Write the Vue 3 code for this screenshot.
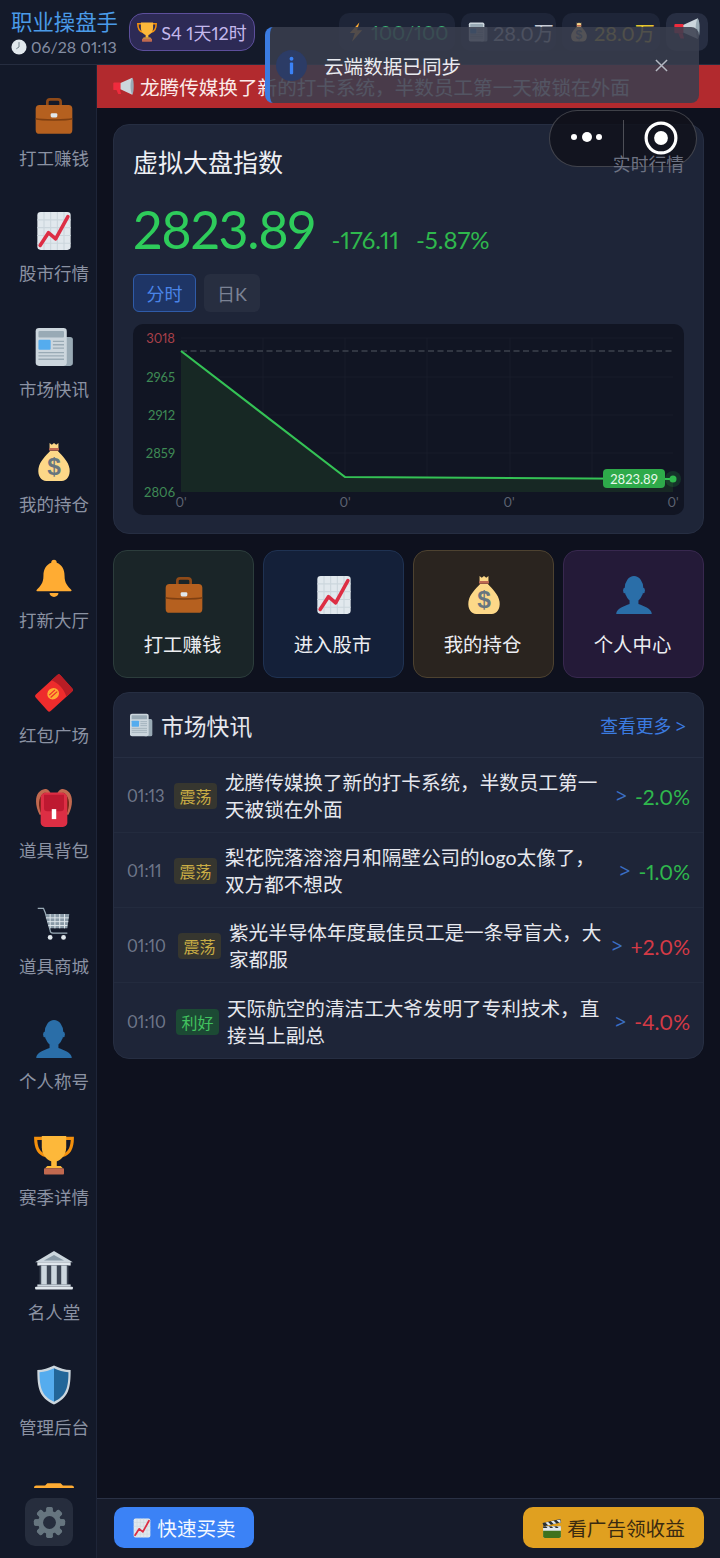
<script setup>
const navItems = [
  { icon: 'i-case', label: '打工赚钱' },
  { icon: 'i-chart', label: '股市行情' },
  { icon: 'i-news', label: '市场快讯' },
  { icon: 'i-bag', label: '我的持仓' },
  { icon: 'i-bell', label: '打新大厅' },
  { icon: 'i-packet', label: '红包广场' },
  { icon: 'i-pack', label: '道具背包' },
  { icon: 'i-cart', label: '道具商城' },
  { icon: 'i-bust', label: '个人称号' },
  { icon: 'i-trophy', label: '赛季详情' },
  { icon: 'i-bank', label: '名人堂' },
  { icon: 'i-shield', label: '管理后台' },
  { icon: 'i-top', label: '' }
]
const quick = [
  { icon: 'i-case', label: '打工赚钱', cls: 'q-green' },
  { icon: 'i-chart', label: '进入股市', cls: 'q-blue' },
  { icon: 'i-bag', label: '我的持仓', cls: 'q-amber' },
  { icon: 'i-bust', label: '个人中心', cls: 'q-purple' }
]
const news = [
  { time: '01:13', tw: 47, tag: '震荡', tc: 'flat', text: '龙腾传媒换了新的打卡系统，半数员工第一天被锁在外面', chg: '-2.0%', cc: 'down' },
  { time: '01:11', tw: 47, tag: '震荡', tc: 'flat', text: '梨花院落溶溶月和隔壁公司的logo太像了，双方都不想改', chg: '-1.0%', cc: 'down' },
  { time: '01:10', tw: 51, tag: '震荡', tc: 'flat', text: '紫光半导体年度最佳员工是一条导盲犬，大家都服', chg: '+2.0%', cc: 'up' },
  { time: '01:10', tw: 49, tag: '利好', tc: 'good', text: '天际航空的清洁工大爷发明了专利技术，直接当上副总', chg: '-4.0%', cc: 'up' }
]
const yLabels = [
  { y: 14, t: '3018', c: 'lbl-red' },
  { y: 53, t: '2965', c: 'lbl-green' },
  { y: 91, t: '2912', c: 'lbl-green' },
  { y: 129, t: '2859', c: 'lbl-green' },
  { y: 168, t: '2806', c: 'lbl-green' }
]
const hLines = [14, 53, 91, 129]
const vLines = [130, 212, 294, 377, 459]
const xLabels = [48, 212, 376, 540]
const gearTeeth = [0, 45, 90, 135, 180, 225, 270, 315]
</script>

<template>
  <div class="app">
    <svg class="defs" width="0" height="0" aria-hidden="true">
      <defs>
        <symbol id="i-case" viewBox="0 0 36 36">
          <path d="M12 9V5.5a2.5 2.5 0 0 1 2.5-2.5h7A2.5 2.5 0 0 1 24 5.5V9" fill="none" stroke="#8f4a18" stroke-width="2.4"/>
          <rect x="1.500" y="8" width="33" height="26" rx="3.500" fill="#b5601f"/>
          <path d="M1.500 20.500c5 1.400 28 1.400 33 0" fill="none" stroke="#7e3f12" stroke-width="1.400"/>
          <rect x="15" y="15.500" width="6" height="3.800" rx="1.200" fill="#e1e8ed"/>
        </symbol>
        <symbol id="i-chart" viewBox="0 0 36 36">
          <rect x="3" y="1" width="30" height="34" rx="3" fill="#e1e8ed"/>
          <path d="M3 8h30M3 15h30M3 22h30M3 29h30M9 1v34M15 1v34M21 1v34M27 1v34" stroke="#ccd6dd" stroke-width="1"/>
          <path d="M5.500 31 13 19.500l6.500 5.500L30.500 5" fill="none" stroke="#dd2e44" stroke-width="3.200" stroke-linecap="round" stroke-linejoin="round"/>
        </symbol>
        <symbol id="i-news" viewBox="0 0 36 36">
          <rect x="22" y="9" width="13" height="26" rx="2.500" fill="#99aab5"/>
          <rect x="1.500" y="1" width="28" height="34" rx="3" fill="#ccd6dd"/>
          <rect x="4" y="3.500" width="23" height="6" rx="1" fill="#99aab5"/>
          <rect x="4" y="11.500" width="11" height="9" rx="1" fill="#55acee"/>
          <path d="M17 13h10M17 16h10M17 19h10M4 23h23M4 26h23M4 29h23" stroke="#99aab5" stroke-width="1.200"/>
        </symbol>
        <symbol id="i-bag" viewBox="0 0 36 36">
          <path d="M14 1l2 1.500L18 1l2 1.500L22 1v5H14z" fill="#fdd888"/>
          <rect x="13.500" y="5.500" width="9" height="2.400" rx="1" fill="#bf6952"/>
          <path d="M14.500 8C11 12 5 17 4 24c-.8 6.500 2.500 11 7 11h14c4.500 0 7.800-4.500 7-11-1-7-7-12-10.500-16z" fill="#fdd888"/>
          <text x="18" y="30" text-anchor="middle" font-size="22" font-weight="700" font-family="Liberation Sans, sans-serif" fill="#67757f">$</text>
        </symbol>
        <symbol id="i-bell" viewBox="0 0 36 36">
          <path d="M18 1.500c-1.500 0-2.500 1-2.500 2.800C11 6 8.500 10 8.500 16c0 7-3 9.500-6 12.500-.8 1 0 1.500 1 1.500h29c1 0 1.800-.5 1-1.500-3-3-6-5.500-6-12.500 0-6-2.500-10-7-11.700C20.500 2.500 19.500 1.500 18 1.500z" fill="#ffac33"/>
          <path d="M14 31.500h8a4 3.500 0 0 1-8 0z" fill="#ffac33"/>
        </symbol>
        <symbol id="i-packet" viewBox="0 0 36 36">
          <g transform="rotate(-42 18 18)">
            <rect x="3" y="8" width="30" height="20" rx="2" fill="#ee2c2c"/>
            <path d="M24 8h7a2 2 0 0 1 2 2v16a2 2 0 0 1-2 2h-7c3-6 3-14 0-20z" fill="#b81d25"/>
            <ellipse cx="17" cy="18" rx="5.500" ry="5" fill="#ffac33"/>
            <path d="M13.500 16.500h7M13 19h8" stroke="#ee2c2c" stroke-width="1.100"/>
          </g>
        </symbol>
        <symbol id="i-pack" viewBox="0 0 36 36">
          <path d="M5 24C-1 12 2 2 10 1c3 0 4 2 5 4l-6 3v16z" fill="#c1694f"/>
          <path d="M31 24c6-12 3-22-5-23-3 0-4 2-5 4l6 3v16z" fill="#c1694f"/>
          <path d="M6 22C3 13 5 6 10 4l2 2-4 3v13z" fill="#662113"/>
          <path d="M30 22c3-9 1-16-4-18l-2 2 4 3v13z" fill="#662113"/>
          <path d="M6 9a5 5 0 0 1 5-5h14a5 5 0 0 1 5 5v22a4 4 0 0 1-4 4H10a4 4 0 0 1-4-4z" fill="#dd2e44"/>
          <path d="M9 6h18v12a3 3 0 0 1-3 3H12a3 3 0 0 1-3-3z" fill="#be1931"/>
          <rect x="16" y="19" width="4" height="9" fill="#fff"/>
        </symbol>
        <symbol id="i-cart" viewBox="0 0 36 36">
          <g transform="translate(2.500 3) scale(.86)">
            <path d="M1 1h6l2 5 5 18a3 3 0 0 0 3 3h15" fill="none" stroke="#99aab5" stroke-width="1.300"/>
            <path d="M9 7h25l-2 15H13z" fill="#8899a6"/>
            <path d="M9.500 11h24M11 15h22M12 19h20M14 7v15M19 7v15M24 7v15M29 7v15" stroke="#e1e8ed" stroke-width="1"/>
            <circle cx="14" cy="31.500" r="2.500" fill="#e1e8ed"/>
            <circle cx="28" cy="31.500" r="2.500" fill="#e1e8ed"/>
          </g>
        </symbol>
        <symbol id="i-bust" viewBox="0 0 36 36">
          <path d="M2 35c0-5 7-7 12-9v-4h8v4c5 2 12 4 12 9z" fill="#2a6ea8"/>
          <ellipse cx="18" cy="12.500" rx="8.500" ry="11.500" fill="#2a6ea8"/>
          <ellipse cx="9.500" cy="14" rx="1.300" ry="2.500" fill="#2a6ea8"/>
          <ellipse cx="26.500" cy="14" rx="1.300" ry="2.500" fill="#2a6ea8"/>
        </symbol>
        <symbol id="i-trophy" viewBox="0 0 36 36">
          <path d="M8 3H1.500c0 8 2.500 14 9 15.500M28 3h6.500c0 8-2.500 14-9 15.500" fill="none" stroke="#f4900c" stroke-width="2.800"/>
          <path d="M7 1h22v10c0 8-6 13-11 13S7 19 7 11z" fill="#fdb83a"/>
          <rect x="15.500" y="21" width="5" height="7" fill="#fdb83a"/>
          <path d="M12 28h12l2 2H10z" fill="#fdb83a"/>
          <rect x="9" y="30" width="18" height="5.500" rx=".8" fill="#c1694f"/>
        </symbol>
        <symbol id="i-bank" viewBox="0 0 36 36">
          <path d="M18 1 35 11H1z" fill="#ccd6dd"/>
          <path d="M18 4.500 27 9.500H9z" fill="#8899a6"/>
          <rect x="3" y="11" width="30" height="3" fill="#e1e8ed"/>
          <rect x="5" y="14" width="26" height="17" fill="#3b4452"/>
          <path d="M6.500 14h5v17h-5zM15.500 14h5v17h-5zM24.500 14h5v17h-5z" fill="#ccd6dd"/>
          <rect x="3" y="31" width="30" height="2" fill="#ccd6dd"/>
          <rect x="1" y="33" width="34" height="2.500" rx=".8" fill="#e1e8ed"/>
        </symbol>
        <symbol id="i-shield" viewBox="0 0 36 36">
          <path d="M18 .5C13 3 8 4.500 3 4.500c0 16 1.500 25 15 31 13.500-6 15-15 15-31-5 0-10-1.500-15-4z" fill="#ccd6dd"/>
          <path d="M18 3C14 5 9.500 6.300 5 6.500 5 20 7 28 18 33z" fill="#55acee"/>
          <path d="M18 3c4 2 8.500 3.300 13 3.500C31 20 29 28 18 33z" fill="#226699"/>
        </symbol>
        <symbol id="i-top" viewBox="0 0 36 36">
          <path d="M12 2h12l2 2h8a2 2 0 0 1 2 2v30H0V6a2 2 0 0 1 2-2h8z" fill="#ffac33"/>
        </symbol>
        <symbol id="i-bolt" viewBox="0 0 36 36">
          <path d="M24 1 7 20h9l-5 15 18-20h-9z" fill="#ffac33"/>
        </symbol>
        <symbol id="i-mega" viewBox="0 0 36 36">
          <path d="M33 3 11 13H3v9h8l22 10z" fill="#ccd6dd"/>
          <path d="M33 3c2 3 2.500 8 2.500 14s-.5 12-2.500 15c-2-3-3-9-3-15s1-11 3-14z" fill="#99aab5"/>
          <path d="M2 11h11v13H2a1.500 1.500 0 0 1-1.500-1.500v-10A1.500 1.500 0 0 1 2 11z" fill="#ef2b3d"/>
          <path d="M6 24h6l2 7H9z" fill="#ef2b3d"/>
        </symbol>
        <symbol id="i-clock" viewBox="0 0 36 36">
          <circle cx="18" cy="18" r="17" fill="#e1e8ed"/>
          <path d="M18 7v11l-6 4" fill="none" stroke="#66757f" stroke-width="2"/>
        </symbol>
        <symbol id="i-clap" viewBox="0 0 36 36">
          <path d="M2 15h32v18a3 3 0 0 1-3 3H5a3 3 0 0 1-3-3z" fill="#e1e8ed"/>
          <path d="M2 23h32v10a3 3 0 0 1-3 3H5a3 3 0 0 1-3-3z" fill="#3e721d"/>
          <path d="M1 9 33 2l1.500 6L3 15z" fill="#292f33"/>
          <path d="M6 8l5 5 5-1-5-5zM16 6l5 5 5-1-5-5zM26 3.500l5 5 3-.5-1.500-5z" fill="#e1e8ed"/>
          <path d="M2 15h32v3H2z" fill="#292f33"/>
          <path d="M7 15l3 3h5l-3-3zM17 15l3 3h5l-3-3zM27 15l3 3h4v-3z" fill="#e1e8ed"/>
        </symbol>
      </defs>
    </svg>

    <header class="topbar">
      <div class="brand">
        <div class="brand-name">职业操盘手</div>
        <div class="brand-time">
          <svg class="ic-clock"><use href="#i-clock" /></svg>
          <span>06/28 01:13</span>
        </div>
      </div>
      <div class="season">
        <svg class="ic-season"><use href="#i-trophy" /></svg>
        <span>S4 1天12时</span>
      </div>
      <div class="stats">
        <div class="pill pill-a">
          <svg class="ic-pill"><use href="#i-bolt" /></svg>
          <span class="val-green">100/100</span>
        </div>
        <div class="pill pill-b">
          <svg class="ic-pill"><use href="#i-news" /></svg>
          <span class="val-white">28.0万</span>
        </div>
        <div class="pill pill-c">
          <svg class="ic-pill"><use href="#i-bag" /></svg>
          <span class="val-yellow">28.0万</span>
        </div>
        <div class="pill pill-d">
          <svg class="ic-pill-m"><use href="#i-mega" /></svg>
        </div>
      </div>
    </header>

    <div class="body">
      <aside class="side">
        <div class="side-list">
          <div v-for="(n, i) in navItems" :key="i" class="side-item">
            <svg class="side-ic"><use :href="'#' + n.icon" /></svg>
            <div v-if="n.label" class="side-label">{{ n.label }}</div>
          </div>
        </div>
        <div class="side-foot">
          <div class="gear-box">
            <svg class="gear" viewBox="0 0 36 36">
              <rect v-for="a in gearTeeth" :key="a" x="14.500" y="1" width="7" height="34" rx="2" fill="#66757f" :transform="'rotate(' + a + ' 18 18)'" />
              <circle cx="18" cy="18" r="12.500" fill="#66757f" />
              <circle cx="18" cy="18" r="7" fill="#262d3d" />
            </svg>
          </div>
        </div>
      </aside>

      <div class="main">
        <div class="ticker">
          <svg class="ic-ticker"><use href="#i-mega" /></svg>
          <span>龙腾传媒换了新的打卡系统，半数员工第一天被锁在外面</span>
        </div>

        <div class="content">
          <section class="card index-card">
            <div class="index-head">
              <h2 class="index-title">虚拟大盘指数</h2>
              <span class="index-sub">实时行情</span>
            </div>
            <div class="price-row">
              <span class="price">2823.89</span>
              <span class="delta">-176.11</span>
              <span class="delta">-5.87%</span>
            </div>
            <div class="tabs">
              <div class="tab tab-on">分时</div>
              <div class="tab tab-off">日K</div>
            </div>
            <div class="chart">
              <svg width="552" height="191" viewBox="0 0 552 191">
                <g stroke="#181d2b" stroke-width="1">
                  <line v-for="y in hLines" :key="'h' + y" x1="48" x2="540" :y1="y" :y2="y" />
                  <line v-for="x in vLines" :key="'v' + x" :x1="x" :x2="x" y1="14" y2="168" />
                </g>
                <line x1="48" x2="540" y1="27" y2="27" stroke="#3d424e" stroke-width="1.500" stroke-dasharray="6 3.500" />
                <path d="M48 27 212 153 540 155V168H48z" fill="#172824" />
                <path d="M48 27 212 153 540 155" fill="none" stroke="#34c255" stroke-width="2.200" />
                <text v-for="l in yLabels" :key="l.t" x="42" :y="l.y + 4.500" text-anchor="end" class="axis" :class="l.c">{{ l.t }}</text>
                <text v-for="(x, i) in xLabels" :key="i" :x="x" y="183" text-anchor="middle" class="axis lbl-x">0'</text>
                <circle cx="540" cy="155" r="8" fill="#2fb84d" opacity=".18" />
                <circle cx="540" cy="155" r="3.500" fill="#2fb84d" />
                <rect x="470" y="145" width="62" height="19" rx="4" fill="#2eaa4a" />
                <text x="501" y="159.500" text-anchor="middle" class="axis lbl-price">2823.89</text>
              </svg>
            </div>
          </section>

          <div class="quick">
            <div v-for="q in quick" :key="q.label" class="q-btn" :class="q.cls">
              <svg class="q-ic"><use :href="'#' + q.icon" /></svg>
              <span class="q-label">{{ q.label }}</span>
            </div>
          </div>

          <section class="card news-card">
            <div class="news-head">
              <svg class="ic-news"><use href="#i-news" /></svg>
              <span class="news-title">市场快讯</span>
              <span class="news-more">查看更多 <i class="chev">&gt;</i></span>
            </div>
            <div v-for="(r, i) in news" :key="i" class="news-row">
              <span class="n-time" :style="{ width: r.tw + 'px' }">{{ r.time }}</span>
              <span class="n-tag" :class="r.tc">{{ r.tag }}</span>
              <span class="n-text">{{ r.text }}</span>
              <span class="n-arrow">&gt;</span>
              <span class="n-chg" :class="r.cc">{{ r.chg }}</span>
            </div>
          </section>
        </div>

        <footer class="bottom">
          <div class="b-btn b-buy">
            <svg class="ic-btn"><use href="#i-chart" /></svg>
            <span>快速买卖</span>
          </div>
          <div class="b-btn b-ad">
            <svg class="ic-btn"><use href="#i-clap" /></svg>
            <span>看广告领收益</span>
          </div>
        </footer>
      </div>
    </div>

    <div class="toast">
      <svg class="toast-ic" viewBox="0 0 32 32">
        <circle cx="16" cy="16" r="16" fill="#2c3c66" />
        <circle cx="16" cy="9" r="2" fill="#3b82f6" />
        <rect x="14.300" y="13" width="3.400" height="12" rx="1" fill="#3b82f6" />
      </svg>
      <span class="toast-text">云端数据已同步</span>
      <svg class="toast-x" viewBox="0 0 14 14">
        <path d="M1 1l12 12M13 1 1 13" stroke="#b4b8c2" stroke-width="1.600" fill="none" />
      </svg>
    </div>

    <div class="capsule">
      <svg class="cap-dots" viewBox="0 0 36 12">
        <circle cx="5" cy="6" r="3" fill="#fff" />
        <circle cx="18" cy="6" r="5" fill="#fff" />
        <circle cx="30" cy="6" r="3" fill="#fff" />
      </svg>
      <span class="cap-line"></span>
      <svg class="cap-rec" viewBox="0 0 32 32">
        <circle cx="16" cy="16" r="14" fill="none" stroke="#fff" stroke-width="3" />
        <circle cx="16" cy="16" r="6.500" fill="#fff" />
      </svg>
    </div>
  </div>
</template>

<style scoped>
.app {
  position: relative;
  width: 720px;
  height: 1558px;
  overflow: hidden;
  display: flex;
  flex-direction: column;
  background: #0e111e;
  color: #e6e8ee;
  font-family: "Lato", "Noto Sans CJK SC", sans-serif;
  font-variant-numeric: proportional-nums;
}
.defs { position: absolute; }

.topbar {
  height: 65px;
  flex: none;
  box-sizing: border-box;
  display: flex;
  align-items: center;
  padding: 0 12px 0 11px;
  background: #141a2a;
  border-bottom: 1px solid #262d40;
}
.brand { width: 118px; flex: none; }
.brand-name { font-size: 21.400px; line-height: 28px; color: #4a9be8; white-space: nowrap; }
.brand-time { display: flex; align-items: center; gap: 4px; margin-top: 1px; font-size: 16px; line-height: 20px; color: #848da2; white-space: nowrap; }
.ic-clock { width: 16px; height: 16px; }
.season {
  flex: none;
  width: 126px;
  height: 38px;
  box-sizing: border-box;
  display: flex;
  align-items: center;
  justify-content: center;
  gap: 4px;
  background: #2d2a55;
  border: 1px solid #5d4f9c;
  border-radius: 14px;
  color: #c4b8ec;
  font-size: 18px;
}
.ic-season { width: 20px; height: 20px; }
.stats { margin-left: auto; display: flex; gap: 6px; }
.pill {
  height: 38px;
  box-sizing: border-box;
  display: flex;
  align-items: center;
  gap: 5px;
  padding-left: 7px;
  background: #1e2538;
  border-radius: 10px;
  font-size: 20px;
  white-space: nowrap;
}
.pill-a { width: 116px; }
.pill-b { width: 95px; }
.pill-c { width: 98px; }
.pill-d { width: 42px; padding-left: 8px; background: #272e42; }
.ic-pill { width: 20px; height: 20px; flex: none; }
.ic-pill-m { width: 26px; height: 26px; margin-top: -6px; }
.val-green { color: #3bb273; }
.val-white { color: #c8ccd6; }
.val-yellow { color: #e6c52e; }

.body { flex: 1; display: flex; min-height: 0; }
.side {
  width: 97px;
  flex: none;
  box-sizing: border-box;
  background: #131929;
  border-right: 1px solid #1e2538;
  display: flex;
  flex-direction: column;
}
.side-list { height: 1423px; flex: none; overflow: hidden; }
.side-item {
  height: 115.400px;
  box-sizing: border-box;
  padding: 31px 0 0 12px;
  display: flex;
  flex-direction: column;
  align-items: center;
}
.side-ic { width: 40px; height: 40px; flex: none; }
.side-label { margin-top: 11px; font-size: 17.500px; line-height: 24px; color: #8b92a3; white-space: nowrap; }
.side-foot { padding: 10px 0 0 25px; }
.gear-box { width: 48px; height: 48px; background: #262d3d; border-radius: 10px; display: flex; align-items: center; justify-content: center; }
.gear { width: 33px; height: 33px; }

.main { flex: 1; min-width: 0; display: flex; flex-direction: column; }
.ticker {
  height: 43px;
  flex: none;
  display: flex;
  align-items: center;
  gap: 6px;
  padding-left: 16px;
  background: #b22a2e;
  color: #fbeaea;
  font-size: 19.600px;
  white-space: nowrap;
  overflow: hidden;
}
.ic-ticker { width: 21px; height: 21px; flex: none; }

.content { flex: 1; min-height: 0; padding: 16px 16px 0 16px; display: flex; flex-direction: column; }
.card { background: #1e2538; border: 1px solid #262e42; border-radius: 16px; box-sizing: border-box; }
.index-card { height: 410px; padding: 17px 19px 0; }
.index-head { display: flex; align-items: center; justify-content: space-between; height: 38px; }
.index-title { margin: 0; font-size: 25px; font-weight: 400; color: #eef0f5; }
.index-sub { font-size: 17.800px; color: #6d7282; position: relative; z-index: 30; top: 2px; }
.price-row { display: flex; align-items: baseline; margin-top: 19px; height: 60px; }
.price { font-size: 52px; line-height: 60px; margin-right: 17px; color: #2ecc5b; letter-spacing: -1.300px; }
.delta { font-size: 24px; margin-right: 17px; color: #2fb84d; }
.tabs { display: flex; gap: 8px; margin-top: 15px; }
.tab { height: 38px; box-sizing: border-box; display: flex; align-items: center; justify-content: center; border-radius: 6px; font-size: 18px; }
.tab-on { width: 63px; background: #1e3566; border: 1px solid #2f5ba8; color: #4a84e8; }
.tab-off { width: 56px; background: #272e40; color: #7b8294; }
.chart { margin-top: 12px; height: 191px; background: #111523; border-radius: 10px; overflow: hidden; }
.chart svg { display: block; }
.axis { font-size: 13px; font-family: "Lato", sans-serif; font-variant-numeric: proportional-nums; }
.lbl-red { fill: #a8404a; }
.lbl-green { fill: #3f8a55; }
.lbl-x { fill: #5d6372; }
.lbl-price { fill: #e8f8ec; }

.quick { display: grid; grid-template-columns: repeat(4, 1fr); gap: 9px; margin-top: 16px; }
.q-btn {
  height: 128px;
  box-sizing: border-box;
  display: flex;
  flex-direction: column;
  align-items: center;
  padding-top: 24px;
  border-radius: 14px;
  border: 1px solid;
}
.q-ic { width: 40px; height: 40px; flex: none; }
.q-label { margin-top: 16px; padding-right: 2px; font-size: 19.400px; line-height: 28px; color: #eceef2; }
.q-green { background: #1a2528; border-color: #2c3d3c; }
.q-blue { background: #142039; border-color: #1f3252; }
.q-amber { background: #2a241f; border-color: #4d4230; }
.q-purple { background: #241a38; border-color: #38284f; }

.news-card { margin-top: 14px; overflow: hidden; }
.news-head { height: 65px; box-sizing: border-box; display: flex; align-items: center; padding: 0 17px 0 15px; border-bottom: 1px solid #262e42; }
.ic-news { width: 24px; height: 24px; flex: none; }
.news-title { margin-left: 8px; font-size: 22.800px; color: #e6e8ee; }
.news-more { margin-left: auto; font-size: 17.800px; color: #3b7be0; white-space: nowrap; }
.chev { font-style: normal; font-family: "Noto Sans", sans-serif; }
.news-row {
  height: 75px;
  box-sizing: border-box;
  display: flex;
  align-items: center;
  padding: 2px 13px 0 13px;
  border-bottom: 1px solid #232b3e;
}
.news-row:last-child { border-bottom: 0; }
.n-time { flex: none; font-size: 16.500px; color: #6f778a; }
.n-tag { flex: none; width: 43px; height: 26px; display: flex; align-items: center; justify-content: center; border-radius: 4px; font-size: 16px; }
.flat { background: #36362f; color: #c9ad45; }
.good { background: #1c4a34; color: #42c25f; }
.n-text { flex: 1; min-width: 0; margin: 0 8px 0 8px; font-size: 19.600px; line-height: 27px; color: #e6e8ee; }
.n-arrow { flex: none; font-family: "Noto Sans", sans-serif; font-size: 19px; color: #3b6fc4; margin-right: 8px; }
.n-chg { flex: none; font-size: 21px; }
.down { color: #2fb84d; }
.up { color: #d43a46; }

.bottom {
  height: 60px;
  flex: none;
  box-sizing: border-box;
  display: flex;
  align-items: flex-start;
  justify-content: space-between;
  padding: 8px 16px 0 17px;
  background: #161b2a;
  border-top: 1px solid #2a3145;
}
.b-btn { height: 41px; box-sizing: border-box; display: flex; align-items: center; justify-content: center; gap: 5px; border-radius: 10px; font-size: 19.600px; white-space: nowrap; }
.b-buy { width: 140px; background: #3b82f6; color: #f4f8ff; }
.b-ad { width: 181px; background: #e0a020; color: #3a2a10; }
.ic-btn { width: 20px; height: 20px; flex: none; }

.toast {
  position: absolute;
  left: 265px;
  top: 27px;
  width: 434px;
  height: 76px;
  box-sizing: border-box;
  display: flex;
  align-items: center;
  padding-left: 6px;
  background: rgba(58, 62, 78, 0.87);
  border-left: 5px solid #3b7be0;
  border-radius: 8px;
  z-index: 10;
}
.toast-ic { width: 31px; height: 31px; flex: none; }
.toast-text { margin-left: 17px; font-size: 19.600px; color: #e9ebf0; white-space: nowrap; }
.toast-x { width: 13px; height: 13px; margin-left: auto; margin-right: 31px; }

.capsule {
  position: absolute;
  left: 549px;
  top: 110px;
  width: 148px;
  height: 57px;
  box-sizing: border-box;
  border: 1.500px solid rgba(255, 255, 255, 0.2);
  border-radius: 29px;
  background: rgba(16, 18, 27, 0.85);
  display: flex;
  align-items: center;
  z-index: 20;
}
.cap-dots { position: absolute; left: 19px; top: 20px; width: 36px; height: 12px; }
.cap-line { position: absolute; left: 73px; top: 9px; width: 1px; height: 38px; background: rgba(255, 255, 255, 0.25); }
.cap-rec { position: absolute; left: 94px; top: 10px; width: 34px; height: 34px; }
</style>

<style>
html, body { margin: 0; background: #0e111e; }
</style>
